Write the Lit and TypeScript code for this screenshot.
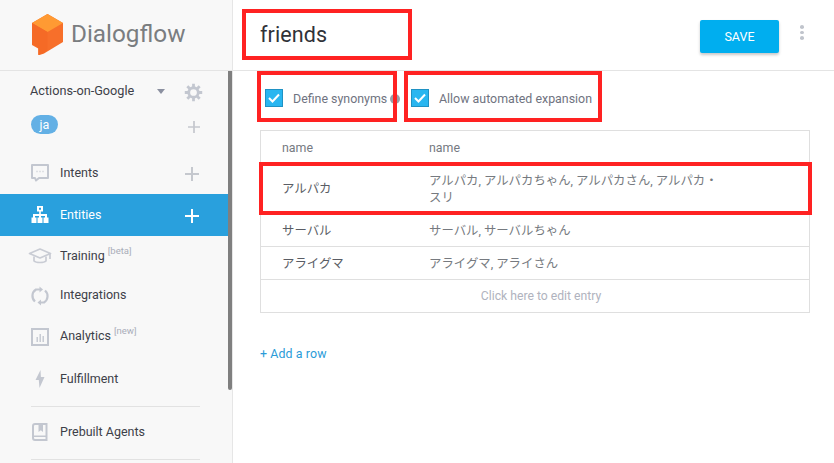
import { LitElement, html, css, svg } from "lit";
import { customElement } from "lit/decorators.js";

const plus = svg`<path d="M6 0h2v6h6v2H8v6H6V8H0V6h6z" fill="currentColor"/>`;

const icons: Record<string, unknown> = {
  intents: svg`<svg width="20" height="20" viewBox="0 0 20 20" fill="none"><path d="M2 2h16v13H9l-3 2.500-1-2.500H2z" stroke="#c3c7d0" stroke-width="2" stroke-linejoin="round"/><path d="M6.500 8.500h1M9.500 8.500h1M12.500 8.500h1" stroke="#c3c7d0" stroke-width="1.400"/></svg>`,
  entities: svg`<svg width="20" height="20" viewBox="0 0 20 20" fill="#fff"><path d="M7 1h6v5.500h-2.200V9H17v3.500h1.500V18h-5v-5.500H15V11h-4v1.500h1.500V18h-5v-5.500H9V11H5v1.500h1.500V18h-5v-5.500H3V9h6.200V6.500H7zM9 2.800v2h2v-2z" fill-rule="evenodd"/></svg>`,
  training: svg`<svg width="24" height="20" viewBox="0 0 24 20" fill="none" stroke="#c9ccd4" stroke-width="1.700"><path d="M1.500 7.500 12 3l10.500 4.500L12 12z" stroke-linejoin="round"/><path d="M6 10.500v4.500c2 2 10 2 12 0v-4.500M22 8v5"/></svg>`,
  integrations: svg`<svg width="20" height="20" viewBox="0 0 20 20" fill="none" stroke="#c3c7d0" stroke-width="2.200"><path d="M5 15.500A7.500 7.500 0 0 1 6 3.500h5"/><path d="M15 4.500A7.500 7.500 0 0 1 14 16.500H9"/><path d="M9.500 0.500v6l3.500-3z" fill="#c3c7d0" stroke="none"/><path d="M11 13.500v6l-3.500-3z" fill="#c3c7d0" stroke="none"/></svg>`,
  analytics: svg`<svg width="20" height="20" viewBox="0 0 20 20" fill="none"><rect x="2" y="2" width="16" height="16" stroke="#c3c7d0" stroke-width="2"/><path d="M6.500 10v5h1.400v-5zM9.500 7v8h1.400V7zM12.500 9v6h1.400V9z" fill="#c3c7d0"/></svg>`,
  fulfillment: svg`<svg width="20" height="20" viewBox="0 0 20 20" fill="#c3c7d0"><path d="M10.500 1 5.500 11h3.300L9.500 19l5-11h-3.600z"/></svg>`,
  prebuilt: svg`<svg width="20" height="20" viewBox="0 0 20 20" fill="none"><path d="M5 2h11.500v16H5a2 2 0 0 1-2-2V4a2 2 0 0 1 2-2z" stroke="#c3c7d0" stroke-width="2"/><path d="M3 13.500h14v1.500H3zM8.500 2h4.500v8l-2.200-1.700L8.500 10z" fill="#c3c7d0"/></svg>`,
};

const rows: [string, string[]][] = [
  ["アルパカ", ["アルパカ, アルパカちゃん, アルパカさん, アルパカ・", "スリ"]],
  ["サーバル", ["サーバル, サーバルちゃん"]],
  ["アライグマ", ["アライグマ, アライさん"]],
];

@customElement("app-root")
export class AppRoot extends LitElement {
  static styles = css`
    :host { display: block; width: 834px; height: 463px; overflow: hidden; position: relative; background: #fff;
      font-family: Roboto, "Noto Sans CJK JP", sans-serif; color: #3c4049; }
    * { box-sizing: border-box; }
    .page { display: grid; grid-template-columns: 233px 1fr; height: 463px; }
    aside { background: #f8f8f8; border-right: 1px solid #e6e6e6; height: 463px; overflow: hidden; position: relative; }
    .logo { height: 71px; border-bottom: 1px solid #e4e4e4; display: flex; align-items: center; padding: 0 0 1px 31px; gap: 7px; }
    .logo span { font-size: 24.300px; color: #7a7d80; font-weight: 400; line-height: 1; margin-top: -1px; }
    .agent { display: flex; align-items: center; height: 38px; padding: 0 0 0 30px; font-size: 12.700px; color: #3d4048; }
    .agent .name { width: 127px; }
    .agent svg { margin-top: 4px; margin-left: 1px; }
    .caret { width: 0; height: 0; border: 4.500px solid transparent; border-top: 5px solid #8b90a0; border-bottom: 0; margin-right: 18px; margin-top: 2px; }
    .lang { display: flex; align-items: center; justify-content: space-between; height: 24px; padding: 0 32px 0 31px; margin-top: 3px; color: #c5c8ce; }
    .pill { background: #63b0e5; color: #fff; font-size: 12.500px; width: 27px; height: 19px; border-radius: 10px; display: flex; align-items: center; justify-content: center; }
    .lang svg { margin-top: 5px; }
    nav { margin-top: 16px; display: flex; flex-direction: column; }
    .item { height: 42px; display: flex; align-items: center; padding: 0 33px 0 30px; font-size: 12.500px; color: #3d4048; position: relative; }
    .item .ic { width: 20px; height: 20px; margin-right: 10px; display: flex; justify-content: center; flex: none; }
    .item .label { flex: 1; margin-bottom: 2px; }
    .item sup { font-size: 9.500px; color: #a9adb8; line-height: 0; vertical-align: 6px; }
    .item > svg { color: #c5c8ce; margin-top: 1px; }
    .item.active { background: #29a0dd; color: #fff; width: 228px; padding-right: 29px; }
    .item.active > svg { color: #fff; }
    .item.training { height: 40px; }
    .item.training .ic { margin-left: -2px; margin-right: 8px; width: 24px; }
    .item.integrations { height: 39px; }
    .item.analytics { height: 43px; }
    .rule { height: 1px; background: #e2e2e2; margin: 6px 32px 4px 31px; }
    .rule.b { margin: 6px 32px 0 31px; }
    .bar { position: absolute; left: 228px; top: 71px; width: 4px; height: 319px; background: #7f7f7f; border-radius: 0 0 2px 2px; }
    main { min-width: 0; }
    header { height: 71px; border-bottom: 1px solid #e4e4e4; display: flex; align-items: center; padding: 0 30px 0 27px; }
    h1 { flex: 1; margin: 0 0 1px; font-size: 21.500px; font-weight: 400; color: #303238; letter-spacing: 0.100px; }
    .save { width: 79px; height: 33px; border-radius: 2px; background: #00aeef; color: #fff; border: 0; font: 12.500px Roboto, sans-serif; box-shadow: 0 2px 3px rgba(0,0,0,.22); margin-right: 21px; margin-top: 2px; padding: 0; }
    .dots { display: flex; flex-direction: column; gap: 2px; margin: 0 0 5px; }
    .dots i { width: 4px; height: 3.500px; border-radius: 50%; background: #c0c4cc; display: block; }
    .opts { display: flex; height: 58px; padding: 0 0 4px 32px; align-items: center; font-size: 12.400px; color: #6f7380; }
    .opt { display: flex; align-items: center; }
    .box { width: 18px; height: 18px; background: #29b6f0; border: 1px solid #1f92c4; display: flex; align-items: center; justify-content: center; margin-right: 10px; }
    .opt.one { width: 146px; }
    .info { width: 10px; height: 10px; border-radius: 50%; background: #9a9ea8; margin-left: 3px; margin-top: 1px; }
    .table { margin: 1px 24px 0 27px; border: 1px solid #dfdfdf; font-size: 12.400px; color: #666a72; }
    .tr { display: grid; grid-template-columns: 147px 1fr; align-items: center; padding-left: 21px; border-bottom: 1px solid #dfdfdf; height: 33px; }
    .tr.tall { height: 50px; }
    .tr.tall .key { margin-bottom: 2px; }
    .tr.head { height: 33px; color: #767a82; }
    .key { color: #5a5d65; }
    .val { line-height: 17px; color: #767a80; }
    .edit { display: flex; height: 32px; align-items: center; justify-content: center; padding-left: 12px; color: #b0b3be; font-size: 12.200px; }
    .add { display: block; margin: 33px 0 0 27px; font-size: 12.400px; color: #2a9bd8; letter-spacing: 0.100px; }
    .mark { position: absolute; border: 4px solid #ff2222; pointer-events: none; }
    .m1 { left: 242px; top: 9px; width: 170px; height: 51px; }
    .m2 { left: 257px; top: 71px; width: 140px; height: 51px; }
    .m3 { left: 404px; top: 71px; width: 198px; height: 51px; }
    .m4 { left: 259px; top: 162px; width: 553px; height: 53px; }
  `;

  private plusIcon(size = 14) {
    return html`<svg width=${size} height=${size} viewBox="0 0 14 14">${plus}</svg>`;
  }

  private check() {
    return html`<div class="box"><svg width="12" height="10" viewBox="0 0 12 10" fill="none"><path d="M1 5l3.500 3.500L11 1.500" stroke="#fff" stroke-width="2"/></svg></div>`;
  }

  render() {
    return html`
      <div class="page">
        <aside>
          <div class="logo">
            <svg width="33" height="41" viewBox="0 0 33 41">
              <path d="M16.500 0 32 9v19L13 39.500l-5.800 2V34.500L1 31V9z" fill="#f76f2a"/>
              <path d="M16.500 0 32 9l-15.500 9L1 9z" fill="#ff9a33"/>
              <path d="M1 9l15.500 9v17.500L13 39 7.500 40.500V34L1 29.500z" fill="#f56a26"/>
            </svg>
            <span>Dialogflow</span>
          </div>
          <div class="agent">
            <div class="name">Actions-on-Google</div>
            <div class="caret"></div>
            <svg width="19" height="19" viewBox="0 0 24 24" fill="none" stroke="#c3c7d0"><circle cx="12" cy="12" r="6" stroke-width="3.500"/><path d="M12 1v5M12 18v5M1 12h5M18 12h5M4.200 4.200l3.500 3.500M16.300 16.300l3.500 3.500M4.200 19.800l3.500-3.500M16.300 7.700l3.500-3.500" stroke-width="3.500"/></svg>
          </div>
          <div class="lang"><div class="pill">ja</div>${this.plusIcon(12)}</div>
          <nav>
            <div class="item"><div class="ic">${icons.intents}</div><div class="label">Intents</div>${this.plusIcon()}</div>
            <div class="item active"><div class="ic">${icons.entities}</div><div class="label">Entities</div>${this.plusIcon()}</div>
            <div class="item training"><div class="ic">${icons.training}</div><div class="label">Training <sup>[beta]</sup></div></div>
            <div class="item integrations"><div class="ic">${icons.integrations}</div><div class="label">Integrations</div></div>
            <div class="item analytics"><div class="ic">${icons.analytics}</div><div class="label">Analytics <sup>[new]</sup></div></div>
            <div class="item"><div class="ic">${icons.fulfillment}</div><div class="label">Fulfillment</div></div>
            <div class="rule"></div>
            <div class="item"><div class="ic">${icons.prebuilt}</div><div class="label">Prebuilt Agents</div></div>
            <div class="rule b"></div>
          </nav>
          <div class="bar"></div>
        </aside>
        <main>
          <header>
            <h1>friends</h1>
            <button class="save">SAVE</button>
            <div class="dots"><i></i><i></i><i></i></div>
          </header>
          <div class="opts">
            <div class="opt one">${this.check()}Define synonyms<span class="info"></span></div>
            <div class="opt">${this.check()}Allow automated expansion</div>
          </div>
          <div class="table">
            <div class="tr head"><div>name</div><div>name</div></div>
            ${rows.map(([k, v]) => html`<div class="tr ${v.length > 1 ? "tall" : ""}"><div class="key">${k}</div><div class="val">${v.map((l) => html`<div>${l}</div>`)}</div></div>`)}
            <div class="edit">Click here to edit entry</div>
          </div>
          <a class="add">+ Add a row</a>
        </main>
      </div>
      <div class="mark m1"></div><div class="mark m2"></div><div class="mark m3"></div><div class="mark m4"></div>
    `;
  }
}
